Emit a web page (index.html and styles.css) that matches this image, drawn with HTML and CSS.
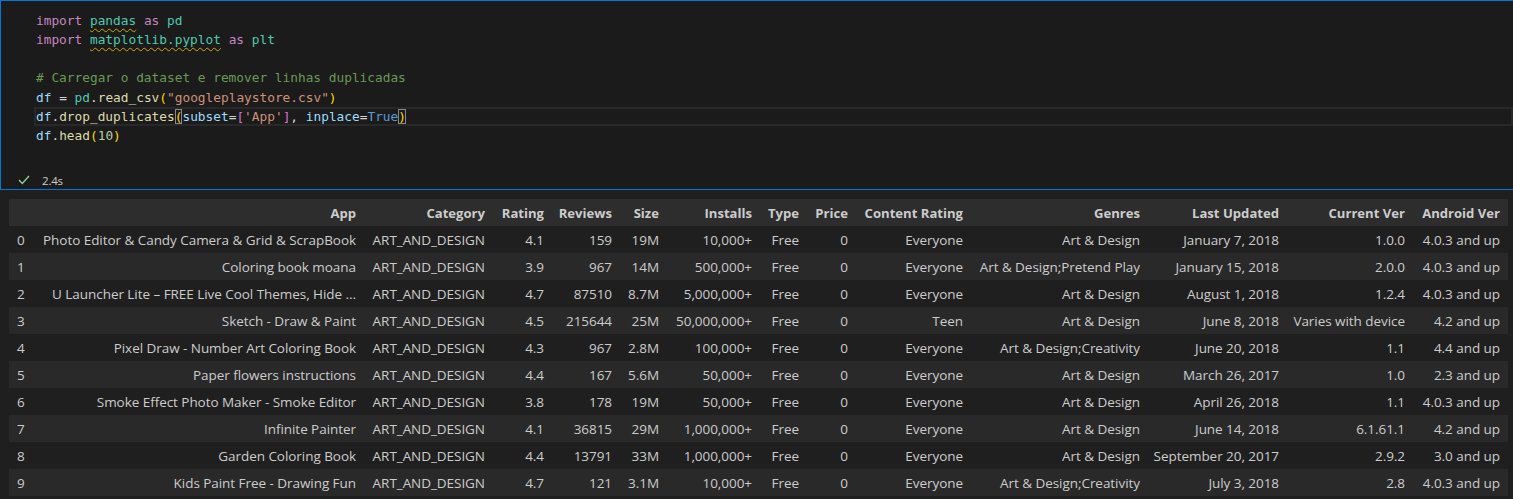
FILE: index.html
```html
<!DOCTYPE html>
<html>
<head>
<meta charset="utf-8">
<link rel="stylesheet" href="styles.css">
</head>
<body>
<div class="cell">
  <div class="code">
    <div class="ln"><span class="kw">import</span> <span class="mod sq">pandas</span> <span class="kw">as</span> <span class="mod">pd</span></div>
    <div class="ln"><span class="kw">import</span> <span class="mod sq">matplotlib.pyplot</span> <span class="kw">as</span> <span class="mod">plt</span></div>
    <div class="ln">&nbsp;</div>
    <div class="ln"><span class="cm"># Carregar o dataset e remover linhas duplicadas</span></div>
    <div class="ln"><span class="var">df</span> = <span class="mod">pd</span>.<span class="fn">read_csv</span><span class="b1">(</span><span class="str">"googleplaystore.csv"</span><span class="b1">)</span></div>
    <div class="ln cur"><span class="var">df</span>.<span class="fn">drop_duplicates</span><span class="b1 match">(</span><span class="var">subset</span>=<span class="b2">[</span><span class="str">'App'</span><span class="b2">]</span>, <span class="var">inplace</span>=<span class="const">True</span><span class="b1 match">)</span></div>
    <div class="ln"><span class="var">df</span>.<span class="fn">head</span><span class="b1">(</span><span class="num">10</span><span class="b1">)</span></div>
  </div>
  <div class="status">
    <svg class="check" width="12" height="10" viewBox="0 0 12 10"><polyline points="1,5 4.3,8.5 11,1" fill="none" stroke="#89d185" stroke-width="1.4"/></svg>
    <span class="time">2.4s</span>
  </div>
</div>
<div class="output">
<table class="df">
  <colgroup>
    <col class="c-idx"><col class="c-app"><col class="c-cat"><col class="c-rat"><col class="c-rev"><col class="c-size"><col class="c-inst"><col class="c-type"><col class="c-price"><col class="c-cr"><col class="c-gen"><col class="c-lu"><col class="c-cv"><col class="c-av">
  </colgroup>
  <thead>
    <tr><th></th><th>App</th><th>Category</th><th>Rating</th><th>Reviews</th><th>Size</th><th>Installs</th><th>Type</th><th>Price</th><th>Content Rating</th><th>Genres</th><th>Last Updated</th><th>Current Ver</th><th>Android Ver</th></tr>
  </thead>
  <tbody>
    <tr><th>0</th><td>Photo Editor &amp; Candy Camera &amp; Grid &amp; ScrapBook</td><td>ART_AND_DESIGN</td><td>4.1</td><td>159</td><td>19M</td><td>10,000+</td><td>Free</td><td>0</td><td>Everyone</td><td>Art &amp; Design</td><td>January 7, 2018</td><td>1.0.0</td><td>4.0.3 and up</td></tr>
    <tr><th>1</th><td>Coloring book moana</td><td>ART_AND_DESIGN</td><td>3.9</td><td>967</td><td>14M</td><td>500,000+</td><td>Free</td><td>0</td><td>Everyone</td><td>Art &amp; Design;Pretend Play</td><td>January 15, 2018</td><td>2.0.0</td><td>4.0.3 and up</td></tr>
    <tr><th>2</th><td>U Launcher Lite – FREE Live Cool Themes, Hide ...</td><td>ART_AND_DESIGN</td><td>4.7</td><td>87510</td><td>8.7M</td><td>5,000,000+</td><td>Free</td><td>0</td><td>Everyone</td><td>Art &amp; Design</td><td>August 1, 2018</td><td>1.2.4</td><td>4.0.3 and up</td></tr>
    <tr><th>3</th><td>Sketch - Draw &amp; Paint</td><td>ART_AND_DESIGN</td><td>4.5</td><td>215644</td><td>25M</td><td>50,000,000+</td><td>Free</td><td>0</td><td>Teen</td><td>Art &amp; Design</td><td>June 8, 2018</td><td>Varies with device</td><td>4.2 and up</td></tr>
    <tr><th>4</th><td>Pixel Draw - Number Art Coloring Book</td><td>ART_AND_DESIGN</td><td>4.3</td><td>967</td><td>2.8M</td><td>100,000+</td><td>Free</td><td>0</td><td>Everyone</td><td>Art &amp; Design;Creativity</td><td>June 20, 2018</td><td>1.1</td><td>4.4 and up</td></tr>
    <tr><th>5</th><td>Paper flowers instructions</td><td>ART_AND_DESIGN</td><td>4.4</td><td>167</td><td>5.6M</td><td>50,000+</td><td>Free</td><td>0</td><td>Everyone</td><td>Art &amp; Design</td><td>March 26, 2017</td><td>1.0</td><td>2.3 and up</td></tr>
    <tr><th>6</th><td>Smoke Effect Photo Maker - Smoke Editor</td><td>ART_AND_DESIGN</td><td>3.8</td><td>178</td><td>19M</td><td>50,000+</td><td>Free</td><td>0</td><td>Everyone</td><td>Art &amp; Design</td><td>April 26, 2018</td><td>1.1</td><td>4.0.3 and up</td></tr>
    <tr><th>7</th><td>Infinite Painter</td><td>ART_AND_DESIGN</td><td>4.1</td><td>36815</td><td>29M</td><td>1,000,000+</td><td>Free</td><td>0</td><td>Everyone</td><td>Art &amp; Design</td><td>June 14, 2018</td><td>6.1.61.1</td><td>4.2 and up</td></tr>
    <tr><th>8</th><td>Garden Coloring Book</td><td>ART_AND_DESIGN</td><td>4.4</td><td>13791</td><td>33M</td><td>1,000,000+</td><td>Free</td><td>0</td><td>Everyone</td><td>Art &amp; Design</td><td>September 20, 2017</td><td>2.9.2</td><td>3.0 and up</td></tr>
    <tr><th>9</th><td>Kids Paint Free - Drawing Fun</td><td>ART_AND_DESIGN</td><td>4.7</td><td>121</td><td>3.1M</td><td>10,000+</td><td>Free</td><td>0</td><td>Everyone</td><td>Art &amp; Design;Creativity</td><td>July 3, 2018</td><td>2.8</td><td>4.0.3 and up</td></tr>
  </tbody>
</table>
</div>
</body>
</html>
```
FILE: styles.css
```css
html, body {
  margin: 0;
  padding: 0;
}
body {
  background: #1f1f1f;
  width: 1513px;
  height: 499px;
  overflow: hidden;
}
.cell {
  background: #1b1b1b;
  border: 1px solid #0078d4;
  border-right: none;
  height: 188px;
  box-sizing: content-box;
}
.code {
  padding: 9.5px 0 0 35px;
  height: 150px;
  box-sizing: border-box;
  font-family: "DejaVu Sans Mono", "Liberation Mono", monospace;
  font-size: 12.8px;
  color: #d4d4d4;
}
.ln {
  height: 19.33px;
  line-height: 19.33px;
  white-space: pre;
}
.cur {
  margin-left: -2px;
  padding-left: 2px;
  box-shadow: inset 0 0 0 2px #282828;
}
.kw { color: #c586c0; }
.mod { color: #4ec9b0; }
.sq {
  text-decoration: underline wavy #cca700;
  text-decoration-thickness: 1px;
  text-underline-offset: 3px;
}
.cm { color: #6a9955; }
.var { color: #9cdcfe; }
.fn { color: #dcdcaa; }
.str { color: #ce9178; }
.b1 { color: #ffd700; }
.b2 { color: #da70d6; }
.const { color: #569cd6; }
.num { color: #b5cea8; }
.match {
  outline: 1px solid #888888;
  outline-offset: -1px;
}
.status {
  height: 38px;
  display: flex;
  align-items: center;
  padding-left: 17px;
  font-family: "Open Sans", "Noto Sans", sans-serif;
  font-size: 11.5px;
  color: #cccccc;
  gap: 12px;
}
.check {
  display: block;
  margin-top: 20px;
}
.time {
  margin-top: 20px;
  letter-spacing: -0.2px;
}
.output {
  padding: 9px 0 0 9px;
}
.df {
  border-collapse: collapse;
  table-layout: fixed;
  width: 1499px;
  font-family: "Open Sans", "Noto Sans", sans-serif;
  font-size: 13.5px;
  color: #cccccc;
}
.df th, .df td {
  height: 27px;
  padding: 0 8px 0 2px;
  text-align: right;
  white-space: nowrap;
  overflow: hidden;
  box-sizing: border-box;
}
.df td {
  letter-spacing: -0.05px;
}
.df thead th {
  background: #2d2d2d;
  font-weight: 700;
  font-size: 13.1px;
}
.df tbody th {
  font-weight: 400;
  text-align: left;
  padding-left: 8px;
}
.df tbody tr:nth-child(even) {
  background: #292929;
}
.c-idx { width: 23px; }
.c-app { width: 332px; }
.c-cat { width: 129px; }
.c-rat { width: 59px; }
.c-rev { width: 68px; }
.c-size { width: 47px; }
.c-inst { width: 93px; }
.c-type { width: 47px; }
.c-price { width: 49px; }
.c-cr { width: 115px; }
.c-gen { width: 177px; }
.c-lu { width: 139px; }
.c-cv { width: 126px; }
.c-av { width: 95px; }
```
